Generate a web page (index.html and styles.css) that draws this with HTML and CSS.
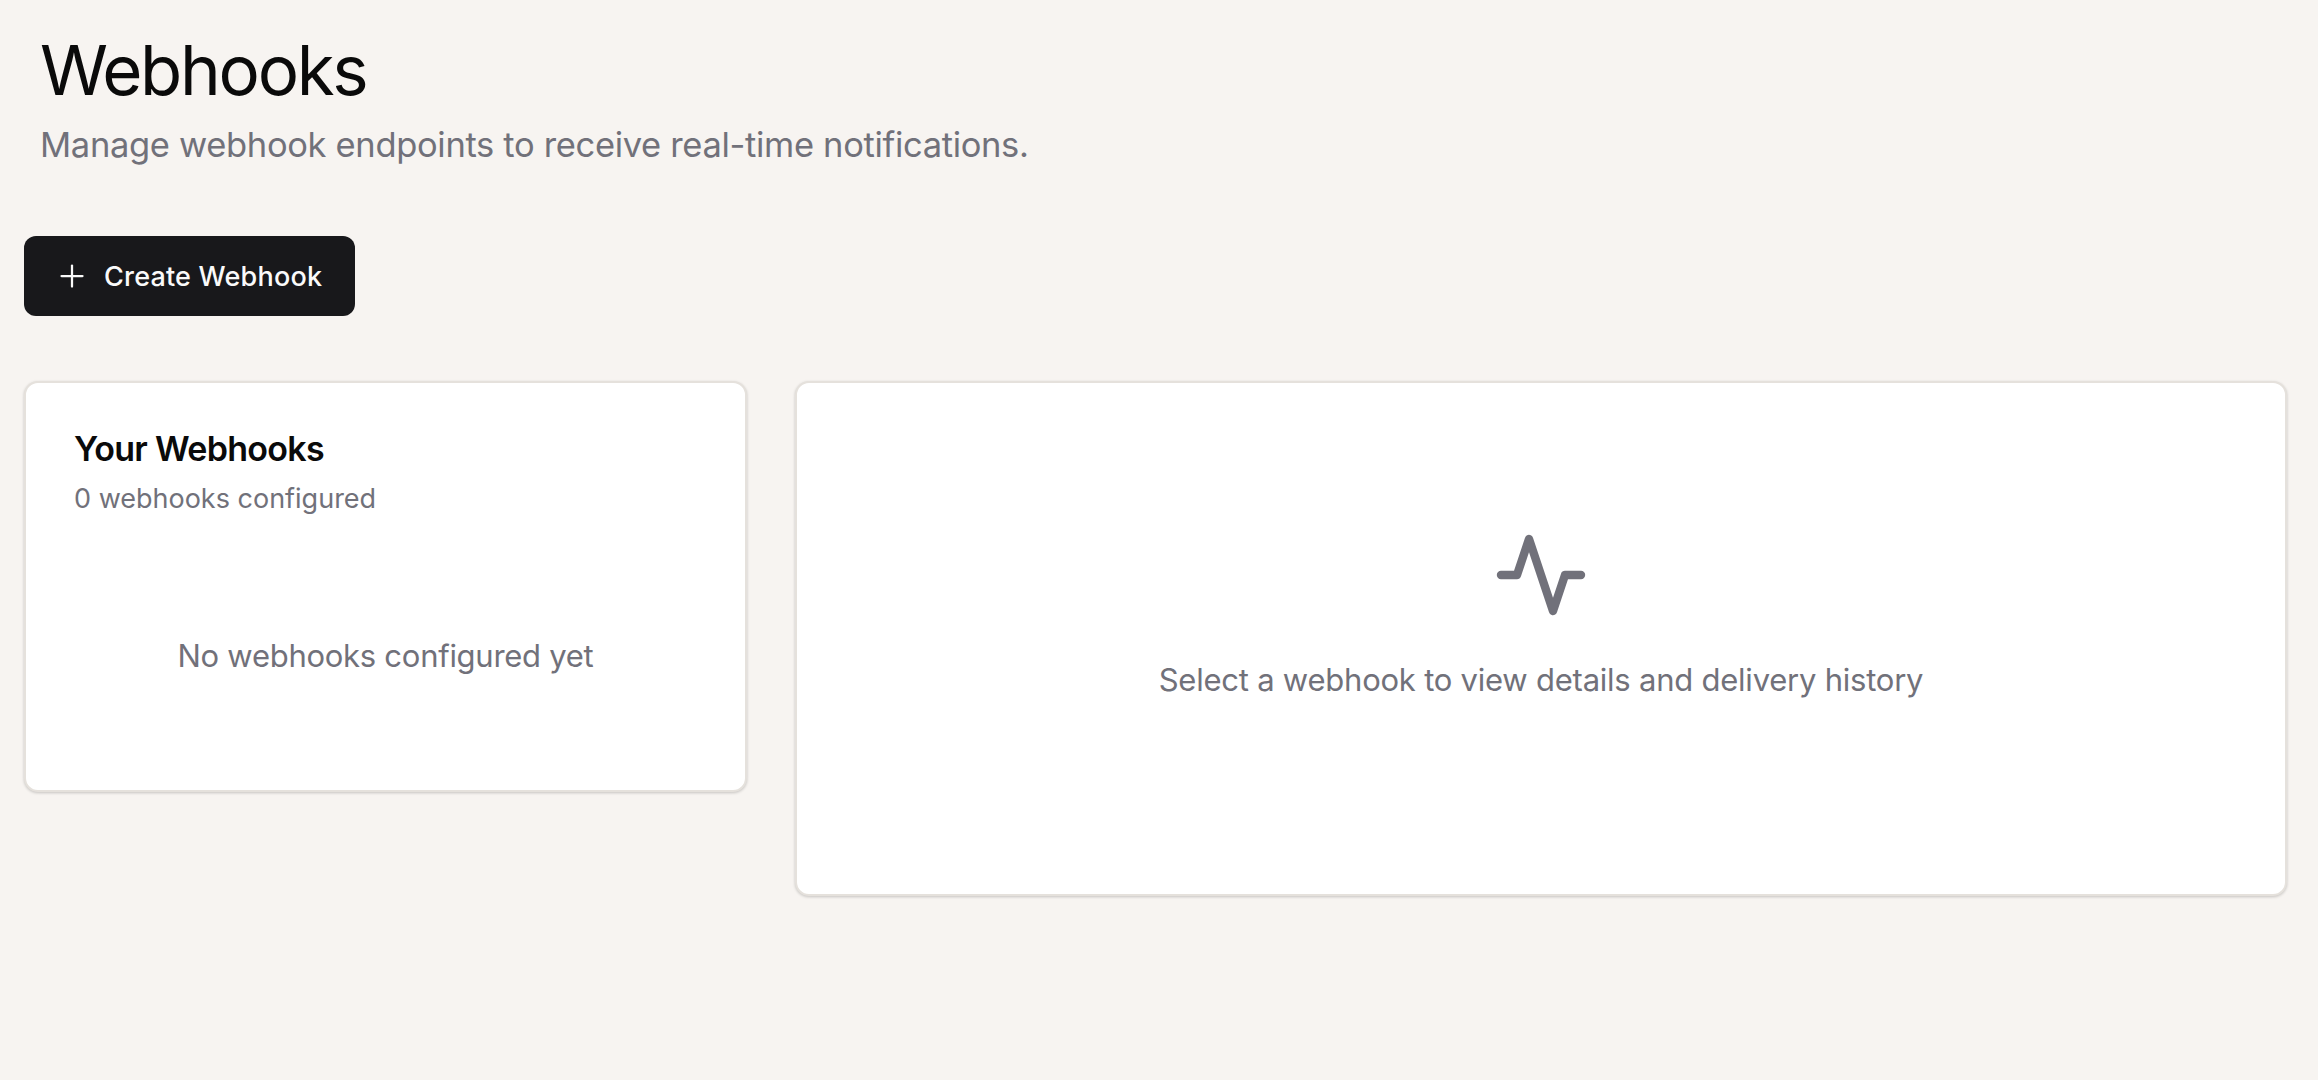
FILE: index.html
```html
<!DOCTYPE html>
<html lang="en">
<head>
    <meta charset="UTF-8">
    <meta name="viewport" content="width=device-width, initial-scale=1.0">
    <title>Webhooks</title>
    <link rel="stylesheet" href="styles.css">
</head>
<body>
    <div class="container">
        <div class="page-header">
            <h1>Webhooks</h1>
            <p class="subtitle">Manage webhook endpoints to receive real-time notifications.</p>
        </div>

        <button class="create-button" type="button">
            <svg class="plus-icon" viewBox="0 0 24 24" fill="none" stroke="currentColor" stroke-width="1.5" stroke-linecap="round" stroke-linejoin="round">
                <path d="M5 12h14"/>
                <path d="M12 5v14"/>
            </svg>
            <span>Create Webhook</span>
        </button>

        <div class="panels">
            <div class="card list-card">
                <h3>Your Webhooks</h3>
                <p class="count">0 webhooks configured</p>
                <p class="empty-list">No webhooks configured yet</p>
            </div>
            <div class="card detail-card">
                <svg class="activity-icon" viewBox="0 0 24 24" fill="none" stroke="currentColor" stroke-width="2.1" stroke-linecap="round" stroke-linejoin="round">
                    <path d="M22 12h-4l-3 9L9 3l-3 9H2"/>
                </svg>
                <p class="detail-hint">Select a webhook to view details and delivery history</p>
            </div>
        </div>
    </div>
</body>
</html>
```

FILE: styles.css
```css
body {
    font-family: 'Inter', sans-serif;
    margin: 0;
    padding: 0;
    background-color: #f7f4f1;
    min-height: 100vh;
}
.container {
    padding: 0 31px 0 24px;
}
.page-header {
    padding: 30px 16px 0;
}
h1 {
    color: #0a0a0a;
    margin: 0;
    font-size: 69px;
    font-weight: 400;
    line-height: 80px;
    letter-spacing: -2.3px;
}
.subtitle {
    color: #71717a;
    margin: 10px 0 0;
    font-size: 34.5px;
    line-height: 50px;
    letter-spacing: -0.33px;
}
.create-button {
    display: flex;
    align-items: center;
    gap: 14px;
    height: 80px;
    width: 331px;
    margin-top: 66px;
    padding: 0 0 0 30px;
    border: none;
    border-radius: 12px;
    background-color: #18181b;
    color: #fafafa;
    font-family: inherit;
    font-size: 27px;
    font-weight: 500;
    letter-spacing: 0.2px;
}
.plus-icon {
    width: 36px;
    height: 36px;
    flex-shrink: 0;
}
.panels {
    display: grid;
    grid-template-columns: 723px 1fr;
    gap: 48px;
    align-items: start;
    margin-top: 65px;
}
.card {
    box-sizing: border-box;
    background-color: #ffffff;
    border: 2px solid #e5e1dc;
    border-radius: 14px;
    box-shadow: 0 1px 3px rgba(0, 0, 0, 0.2);
}
.list-card {
    height: 411px;
    padding: 44px 48px 0;
}
h3 {
    color: #0a0a0a;
    margin: 0;
    font-size: 34px;
    font-weight: 600;
    line-height: 44px;
    letter-spacing: -0.7px;
}
.count {
    color: #71717a;
    margin: 8px 0 0;
    font-size: 27px;
    line-height: 40px;
}
.empty-list {
    color: #71717a;
    margin: 115px 0 0;
    font-size: 31px;
    line-height: 44px;
    text-align: center;
    letter-spacing: -0.27px;
}
.detail-card {
    height: 515px;
    display: flex;
    flex-direction: column;
    align-items: center;
    padding-top: 144px;
}
.activity-icon {
    width: 96px;
    height: 96px;
    color: #71717a;
}
.detail-hint {
    color: #71717a;
    margin: 35px 0 0;
    font-size: 31px;
    line-height: 44px;
    letter-spacing: -0.23px;
}
```
